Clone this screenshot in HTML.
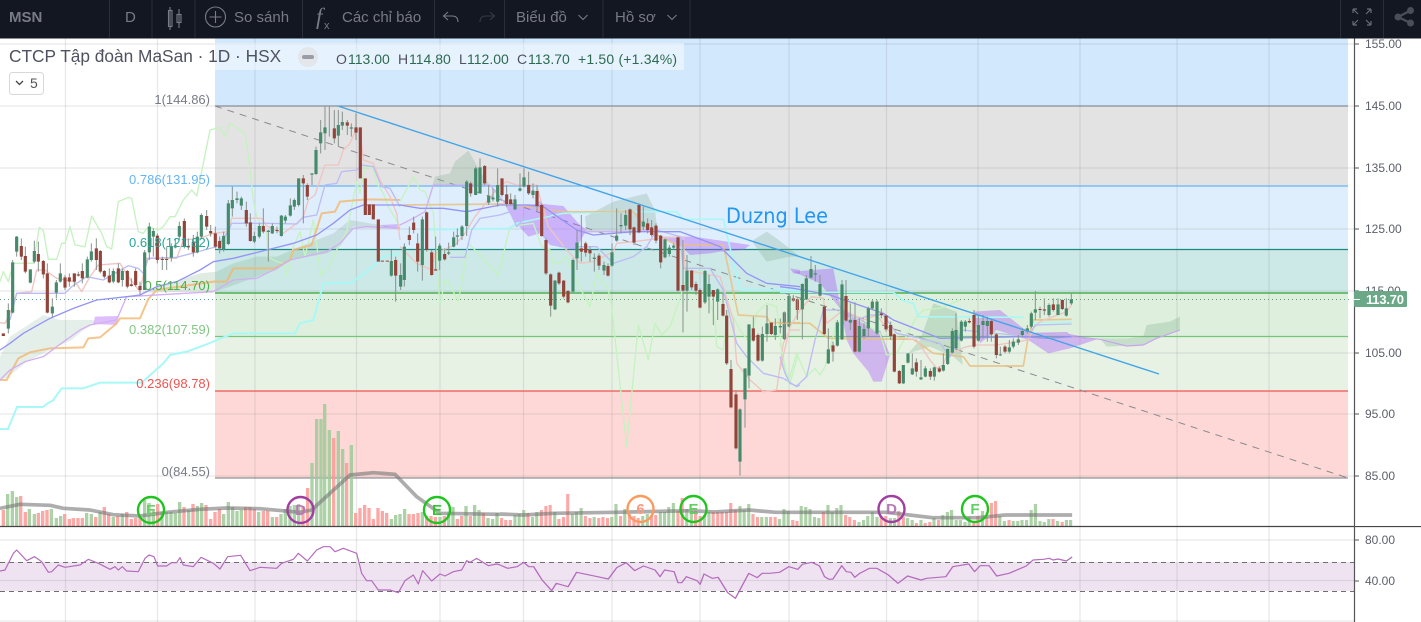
<!DOCTYPE html>
<html lang="vi"><head><meta charset="utf-8"><title>MSN</title>
<style>
html,body{margin:0;padding:0;background:#fff;width:1421px;height:622px;overflow:hidden}
svg{display:block;font-family:"Liberation Sans","Noto Sans CJK SC",sans-serif}
.n{fill:none;stroke-linejoin:round}
.g{stroke:#468a6c;stroke-width:9.500;fill:none}
.r{stroke:#93443a;stroke-width:9.500;fill:none}
.w{stroke:#87938d;stroke-width:3;fill:none}
.h{fill:#787b86;font-size:15px}
</style></head><body>
<svg width="1421" height="622" viewBox="0 0 1421 622" xmlns="http://www.w3.org/2000/svg">
<!-- bands -->
<rect x="215" y="38" width="1133" height="68" fill="#d1e8fd"/>
<rect x="215" y="106" width="1133" height="80" fill="#e3e3e4"/>
<rect x="215" y="186" width="1133" height="63" fill="#dfeefc"/>
<rect x="215" y="249" width="1133" height="44" fill="#cce8e7"/>
<rect x="215" y="293" width="1133" height="43" fill="#deefdd"/>
<rect x="215" y="336" width="1133" height="55" fill="#e7f2e5"/>
<rect x="215" y="391" width="1133" height="87" fill="#fdd8d6"/>
<rect x="0" y="562" width="1354" height="29" fill="#efe3f1"/>
<!-- grid -->
<path d="M65.5 38V622M157.5 38V622M255 38V622M356.5 38V622M440 38V622M523.5 38V622M612 38V622M700 38V622M789 38V622M886.5 38V622M978 38V622M1080 38V622M1177 38V622M1269 38V622" stroke="#8a8a8a" stroke-opacity=".2" stroke-width="1.2" fill="none"/>
<path d="M0 44H1354M0 106H1354M0 168H1354M0 229H1354M0 291H1354M0 353H1354M0 414H1354M0 476H1354M0 540H1354M0 580.5H1354M0 621H1354" stroke="#8a8a8a" stroke-opacity=".2" stroke-width="1.2" fill="none"/>
<!-- fib lines -->
<path d="M215 106H1348" stroke="#787b86" stroke-width="1.1"/>
<path d="M215 186H1348" stroke="#64b5f6" stroke-width="1.2"/>
<path d="M215 249.5H1348" stroke="#1a8a7e" stroke-width="1.2"/>
<path d="M215 293H1348" stroke="#4caf50" stroke-width="1.4"/>
<path d="M215 336.5H1348" stroke="#78c47c" stroke-width="1.2"/>
<path d="M215 391H1348" stroke="#ef5350" stroke-width="1.2"/>
<path d="M215 478H1348" stroke="#787b86" stroke-width="1.1"/>
<path d="M215 106L1348 478" stroke="#8a8a90" stroke-width="1" stroke-dasharray="7 6" fill="none"/>
<path d="M0 299.5H1352" stroke="#5f9a80" stroke-width="1" stroke-dasharray="1 3" fill="none"/>
<!-- volume -->
<g transform="translate(0 526) scale(.33333 -1)" stroke-width="10" fill="none" opacity=".85">
<path stroke="#fb9a98" d="M10 0V16M62 0V30M76 0V14M115 0V13M128 0V15M141 0V16M194 0V12M208 0V7M220 0V8M234 0V8M247 0V8M287 0V9M313 0V19M326 0V12M353 0V10M380 0V14M394 0V7M407 0V8M420 0V9M473 0V22M552 0V19M579 0V22M618 0V21M632 0V7M645 0V14M658 0V17M737 0V19M750 0V19M763 0V17M790 0V15M803 0V15M830 0V9M909 0V20M923 0V38M1001 0V88M1040 0V63M1067 0V13M1080 0V18M1094 0V21M1107 0V18M1120 0V7M1134 0V18M1147 0V15M1160 0V13M1227 0V12M1240 0V12M1254 0V13M1280 0V10M1293 0V10M1306 0V9M1333 0V10M1372 0V7M1385 0V10M1411 0V10M1450 0V13"/>
<path stroke="#9fcb98" d="M23 0V32M37 0V35M50 0V29M88 0V17M103 0V12M154 0V17M169 0V8M182 0V10M260 0V13M274 0V12M300 0V14M340 0V9M367 0V12M434 0V26M447 0V23M460 0V16M486 0V14M500 0V14M513 0V14M526 0V13M539 0V24M566 0V16M592 0V20M605 0V23M671 0V12M685 0V24M698 0V19M711 0V15M724 0V16M776 0V14M817 0V9M843 0V12M856 0V17M870 0V20M883 0V21M896 0V22M936 0V63M950 0V107M963 0V107M974 0V122M988 0V96M1015 0V95M1028 0V77M1054 0V81M1174 0V7M1187 0V11M1200 0V12M1214 0V17M1267 0V14M1320 0V9M1346 0V13M1359 0V19M1398 0V20M1424 0V21M1437 0V16M1464 0V8M1478 0V7M1491 0V13"/>
</g>
<g transform="translate(500 526) scale(.3827 -1)" stroke-width="8.2" fill="none" opacity=".85">
<path stroke="#fb9a98" d="M4 0V8M15 0V6M27 0V6M73 0V13M108 0V16M120 0V20M131 0V21M154 0V7M166 0V9M177 0V32M223 0V10M235 0V8M258 0V8M269 0V9M281 0V8M315 0V10M338 0V12M350 0V10M361 0V8M396 0V11M407 0V11M465 0V15M476 0V28M511 0V15M523 0V10M557 0V14M569 0V14M580 0V14M592 0V14M603 0V23M615 0V16M661 0V12M673 0V9M707 0V9M719 0V9M765 0V6M776 0V5M845 0V14M903 0V11M914 0V9M926 0V6M996 0V9M1008 0V10M1042 0V15M1054 0V9M1088 0V3M1111 0V3M1123 0V4M1146 0V6M1238 0V5M1249 0V10M1272 0V9M1284 0V23M1295 0V25M1330 0V6M1445 0V7M1469 0V4"/>
<path stroke="#9fcb98" d="M39 0V11M50 0V12M62 0V16M85 0V9M96 0V14M143 0V14M189 0V12M200 0V14M212 0V18M246 0V9M292 0V9M303 0V22M326 0V17M373 0V10M385 0V12M419 0V14M430 0V14M441 0V19M453 0V23M488 0V17M500 0V15M534 0V11M546 0V14M627 0V20M638 0V16M650 0V22M684 0V9M696 0V9M730 0V7M742 0V17M753 0V15M787 0V20M799 0V19M810 0V17M822 0V9M833 0V8M857 0V21M868 0V14M880 0V18M891 0V21M938 0V4M950 0V6M961 0V10M973 0V14M985 0V9M1020 0V8M1031 0V8M1065 0V8M1077 0V6M1100 0V6M1134 0V8M1157 0V11M1169 0V14M1180 0V16M1192 0V6M1203 0V6M1215 0V4M1226 0V9M1261 0V15M1306 0V10M1318 0V5M1341 0V5M1353 0V5M1364 0V6M1376 0V6M1388 0V16M1399 0V22M1411 0V5M1422 0V4M1434 0V7M1457 0V5M1480 0V6M1491 0V6"/>
</g>
<path d="M0 526.5H1421" stroke="#444" stroke-width="1.2"/>
<!-- SMA -->
<g transform="translate(0 400) scale(.33333)"><polyline class="n" stroke="#777" stroke-opacity=".6" stroke-width="11" points="0,325 60,313 150,316 190,325 270,330 340,344 420,348 500,337 600,328 680,324 780,326 900,337 935,330 1050,225 1120,218 1185,223 1250,290 1320,340 1500,343"/></g>
<g transform="translate(500 470) scale(.3827 .33333)"><polyline class="n" stroke="#777" stroke-opacity=".6" stroke-width="11" points="0,132 60,135 140,130 300,127 500,122 560,126 650,120 720,127 1010,127 1130,143 1250,143 1320,135 1495,135"/></g>
<!-- RSI -->
<path d="M0 562.5H1354M0 591.5H1354" stroke="#6f6f6f" stroke-width="1" stroke-dasharray="5 4" fill="none"/>
<g transform="translate(0 400) scale(.33333)"><polyline class="n" stroke="#b46cbd" stroke-width="3.6" points="0,513 15,510 40,460 50,450 80,482 103,470 125,485 145,517 155,515 175,495 195,502 240,495 265,478 295,490 330,508 345,500 355,510 367,500 380,513 415,515 435,475 447,465 462,470 473,498 500,498 515,488 530,488 540,473 550,495 580,500 603,472 640,490 660,507 683,470 722,466 750,512 780,502 830,505 845,490 880,478 895,460 922,483 950,450 970,440 990,440 1005,455 1030,445 1070,460 1085,520 1100,542 1115,542 1135,570 1170,570 1195,578 1215,542 1240,525 1255,552 1268,512 1295,543 1320,522 1335,528 1360,515 1385,510 1400,482 1410,487 1430,475 1465,497 1490,492 1500,495"/></g>
<g transform="translate(500 470) scale(.3827 .33333)"><polyline class="n" stroke="#b46cbd" stroke-width="3.6" points="0,285 20,295 45,290 62,277 75,290 88,290 110,330 135,362 147,340 178,350 200,307 255,320 283,327 305,293 330,278 352,302 375,288 405,300 418,320 430,300 455,305 465,338 475,338 487,320 515,332 523,343 533,312 555,325 570,322 595,368 615,385 650,310 672,323 685,310 705,310 730,307 755,290 778,298 790,283 815,277 835,288 848,320 860,328 870,327 893,287 905,305 917,307 927,322 940,310 965,295 985,295 1015,315 1040,340 1065,318 1100,330 1115,325 1165,320 1183,290 1225,282 1240,305 1255,287 1278,287 1298,318 1330,310 1375,288 1393,270 1420,268 1435,265 1445,270 1458,267 1480,273 1495,261"/></g>
<!-- left section 0-400 -->
<polyline class="n" stroke="#a8f8f8" stroke-width="2" points="0,429 8,429 17,407 43,407 48,403 54,400"/>
<g transform="translate(0 100) scale(.33333)">
<polygon fill="#7fae8f" fill-opacity=".2" points="0,770 30,710 130,645 180,660 280,660 285,670 250,690 215,720 150,750 80,785 50,810 20,835 0,835"/>
<polygon fill="#a855f7" fill-opacity=".38" points="285,650 355,648 350,675 280,672"/>
<polygon fill="#7fae8f" fill-opacity=".25" points="420,578 490,555 600,520 650,515 700,490 770,470 830,470 900,440 1000,400 1050,360 1200,385 1140,385 1060,380 1020,440 980,460 870,480 830,510 770,530 690,560 645,575"/>
<polygon fill="#a855f7" fill-opacity=".35" points="1140,375 1200,372 1200,388 1160,384"/>
<polyline class="n" stroke="#c4f3bf" stroke-width="4" points="0,545 10,515 25,545 40,490 100,490 118,382 130,392 145,478 170,478 185,430 195,430 210,380 225,435 255,440 275,348 305,400 320,440 335,447 355,305 385,292 395,295 415,395 430,400 445,380 475,390 490,380 510,350 525,350 550,300 575,270 590,288 610,190 630,90 660,82 675,110 690,70 735,100 745,170 760,300 770,350 800,400 805,470 830,485 850,490 860,525 880,440 900,395 915,470 940,360 962,525 985,505 1010,450 1040,395 1070,245 1080,280 1095,200 1120,205 1130,250 1150,280 1165,320 1200,380"/>
<polyline class="n" stroke="#a8f8f8" stroke-width="6" points="160,900 185,865 250,865 300,848 425,848 490,790 510,765 560,755 615,735 700,700 885,700 900,670 940,660 970,550 1055,548 1100,515 1150,470 1200,460"/>
<polyline class="n" stroke="#f2b66e" stroke-width="6" stroke-opacity=".8" points="0,840 20,840 55,775 90,757 150,745 250,742 265,715 300,712 350,670 360,655 420,655 445,597 470,570 640,545 680,545 700,505 825,505 870,480 880,450 935,435 965,340 1005,335 1020,305 1100,298 1200,300"/>
<polyline class="n" stroke="#d2b0f2" stroke-width="4" points="0,840 30,810 75,785 130,770 170,740 240,690 270,675 350,660 380,590 640,575 700,540 770,535 830,505 870,480 980,455 1020,430 1060,385 1100,380 1200,385"/>
<polyline class="n" stroke="#f0c4c0" stroke-width="4" points="0,668 15,670 30,640 50,580 95,575 110,510 135,510 170,535 225,545 245,575 270,530 295,495 360,490 385,530 420,575 440,475 500,475 530,475 550,420 600,415 640,400 685,395 695,355 785,355 800,378 850,400 890,370 910,350 925,300 945,285 975,195 1015,195 1030,150 1050,130 1068,90 1080,90 1090,180 1120,190 1140,240 1170,290 1190,340 1200,420"/>
<polyline class="n" stroke="#bcbcf5" stroke-width="4" points="30,660 50,580 195,580 215,560 260,530 310,540 385,497 415,505 430,520 445,475 530,472 595,455 650,440 685,395 695,370 780,370 800,370 890,372 910,352 950,345 975,255 1010,250 1025,215 1070,210 1085,195 1120,200 1145,260 1170,265 1200,320"/>
<polyline class="n" stroke="#9494f6" stroke-width="4" points="0,750 30,730 70,700 150,655 220,625 290,600 380,590 420,585 470,560 530,545 600,510 640,485 700,475 800,450 880,430 950,405 1000,370 1050,330 1090,315 1200,315"/>
<path class="w" d="M25 610V700M38 480V640M50 408V470M64 415V480M76 440V520M91 508V550M103 422V490M115 425V515M130 480V535M142 490V640M157 595V652M169 540V595M181 490V548M195 525V570M208 520V560M223 520V560M235 515V530M247 490V550M262 470V535M274 430V485M289 415V510M301 450V520M313 510V535M328 505V550M340 505V550M355 490V550M367 505V560M382 510V565M394 535V560M407 505V560M420 545V585M434 450V570M448 368V480M460 385V470M472 400V490M487 470V510M500 440V510M514 430V485M526 415V445M538 365V420M553 355V445M565 415V450M580 405V470M592 395V460M604 340V415M620 330V390M632 375V410M646 380V445M659 410V460M671 395V455M685 300V435M697 260V350M711 275V310M724 290V330M739 305V380M751 340V425M763 395V430M778 370V415M790 325V400M805 390V485M817 370V402M831 380V400M844 345V410M856 345V370M871 295V350M883 295V330M896 235V320M910 225V370M922 250V300M936 220V255M948 140V225M962 60V160M975 20V150M988 20V110M1003 30V130M1015 30V140M1027 35V90M1042 60V105M1054 70V110M1068 40V120M1174 450V530M1187 470V605"/>
<path class="g" d="M38 487V638M25 630V686M50 410V455M91 508V548M103 453V485M157 620V640M169 547V578M181 520V545M262 478V533M274 454V480M340 513V545M367 513V540M434 457V570M448 380V457M460 393V410M514 438V473M538 378V410M592 410V457M604 345V410M671 408V447M685 310V432M697 300V325M711 295V300M724 295V317M763 408V425M778 378V410M805 392V396M817 378V400M844 347V408M856 350V362M871 316V347M883 300V320M896 235V315M936 220V224M948 150V222M962 97V130M975 82V100M1015 75V107M1027 66V77M1054 82V86M1174 483V527"/>
<path class="r" d="M10 700V708M64 438V470M76 468V515M115 462V485M130 483V523M142 520V638M195 532V563M208 532V545M223 520V545M235 523V527M247 513V535M289 445V480M301 453V515M313 513V530M328 527V547M355 505V547M382 513V560M394 553V558M407 513V555M420 558V570M472 407V480M487 477V480M500 477V480M526 437V442M553 363V440M565 438V442M580 425V457M620 348V380M632 393V400M646 400V440M659 423V445M739 330V370M751 367V423M790 378V395M831 390V393M910 235V250M922 255V290M1003 85V115M1042 67V77M1068 82V98M1081 82V235M1096 235V345M1108 313V345M1120 313V358M1135 358V485M1147 482V485M1162 482V485M1187 480V527"/>
</g>
<!-- mid section 400-800 -->
<g transform="translate(400 130) scale(.33333)">
<polygon fill="#7fae8f" fill-opacity=".28" points="80,225 105,140 150,130 165,95 205,62 250,140 270,165 100,165"/>
<polygon fill="#a855f7" fill-opacity=".38" points="315,225 430,222 490,228 535,280 560,300 525,360 450,345 420,310 385,320 340,270"/>
<polygon fill="#7fae8f" fill-opacity=".28" points="555,260 640,215 740,190 765,240 772,300 700,310 560,305"/>
<polygon fill="#a855f7" fill-opacity=".38" points="775,320 880,320 1050,345 1030,360 960,365 930,370 870,375 840,345"/>
<polygon fill="#7fae8f" fill-opacity=".28" points="1060,330 1100,305 1130,325 1200,380 1170,380 1100,395 1060,340"/>
<polygon fill="#a855f7" fill-opacity=".38" points="1170,415 1200,420 1200,432 1180,430"/>
<polyline class="n" stroke="#c4f3bf" stroke-width="4" points="0,215 40,140 60,180 75,185 100,250 120,525 135,450 145,455 175,515 205,340 230,365 265,405 295,435 330,290 400,280 425,350 450,360 460,400 475,400 500,380 520,430 535,465 570,530 590,430 625,480 635,530 650,670 680,950 715,585 745,690 765,580 785,615 810,590 840,505 860,440 885,430 910,420 925,500 945,570 950,650 970,660 985,540 1000,560 1020,600 1050,640 1070,550 1100,520 1130,530 1150,700 1170,760 1195,670"/>
<polyline class="n" stroke="#a8f8f8" stroke-width="5" points="75,300 330,295 350,280 490,250 660,245 830,245 850,268 970,268 1020,480 1200,480"/>
<polyline class="n" stroke="#e8bf80" stroke-width="5" stroke-opacity=".8" points="0,225 320,222 490,245 700,245 745,300 780,320 830,345 970,345 1015,555 1100,560 1110,578 1200,578"/>
<polyline class="n" stroke="#f0c4c0" stroke-width="4" points="0,350 50,400 95,420 105,370 165,345 195,310 225,260 300,165 320,155 350,165 410,165 425,220 445,290 500,360 540,400 580,395 640,365 650,340 700,335 780,325 850,320 855,420 960,440 1000,570 1010,700 1050,750 1090,785 1130,780 1150,640 1170,600 1200,600"/>
<polyline class="n" stroke="#bcbcf5" stroke-width="4" points="150,382 195,382 215,300 240,265 300,255 330,245 350,290 420,215 440,330 480,350 590,350 640,400 700,380 740,350 770,300 840,320 850,415 930,415 970,480 1010,640 1040,680 1090,730 1150,745 1190,770 1200,765"/>
<polyline class="n" stroke="#d2b0f2" stroke-width="4" points="0,285 40,265 75,245 100,165 270,165 320,225 440,225 490,290 530,300 560,305 700,305 770,300"/>
<polyline class="n" stroke="#9494f6" stroke-width="4" points="0,225 60,235 130,235 200,245 300,225 380,225 430,230 530,300 580,315 700,305 840,305 960,350 1040,430 1100,460 1200,470"/>
<path class="w" d="M2 400V480M13 340V470M28 290V345M41 260V310M53 310V425M67 260V452M80 245V365M95 360V437M107 320V420M119 340V420M134 355V392M146 338V375M161 305V352M172 295V345M186 285V330M200 150V318M212 155V200M227 110V195M240 85V190M254 105V165M266 165V225M279 175V215M293 115V230M306 145V200M320 165V230M332 190V225M345 195V240M360 130V185M372 115V172M386 125V195M399 160V205M411 165V245M425 220V320M438 325V435M452 430V560M465 450V540M477 425V465M491 450V505M504 480V520M519 385V490M531 300V420M544 255V395M557 335V380M570 350V395M583 370V425M597 370V420M612 395V435M624 400V440M636 340V410M650 235V335M663 250V310M677 240V300M690 235V315M702 290V345M717 220V310M730 230V300M743 265V310M755 270V320M768 280V340M782 315V415M795 325V385M808 345V380M821 340V360M834 320V485M849 330V607M861 375V545M875 420V480M888 455V495M900 475V535M915 420V522M927 435V550M940 480V585M953 475V570M969 490V560M980 540V705M993 690V835M1008 780V958M1020 835V1037M1035 800V893M1047 715V775M1060 560V635M1074 610V695M1087 590V695M1101 525V635M1114 578V615M1126 565V630M1141 565V610M1153 545V630M1167 495V590M1180 498V515M1192 505V565"/>
<path class="g" d="M2 435V470M13 350V450M67 268V405M119 347V392M146 367V371M161 322V350M172 316V320M186 290V318M200 155V288M227 115V195M240 112V190M266 198V218M279 203V208M293 165V215M345 208V238M360 175V182M372 142V170M399 182V195M465 452V538M519 390V485M531 338V385M583 383V387M612 405V422M636 367V407M650 317V332M663 285V289M677 255V287M730 275V290M795 328V382M808 353V372M821 347V353M861 422V482M915 423V517M927 462V500M953 478V515M1020 838V995M1035 715V808M1047 583V737M1087 612V692M1101 580V612M1126 588V615M1141 588V592M1153 547V627M1167 498V590"/>
<path class="r" d="M28 315V330M41 278V300M53 340V395M80 247V360M95 367V435M107 418V422M134 372V388M212 160V190M254 108V160M306 145V195M320 193V222M332 208V222M386 165V190M411 183V228M425 225V318M438 330V430M452 433V527M477 428V460M491 452V500M504 483V517M544 355V365M557 340V368M570 360V370M597 377V407M624 408V437M690 238V298M702 292V338M717 225V307M743 280V300M755 292V315M768 287V332M782 317V397M834 322V482M849 465V482M875 422V472M888 462V482M900 480V533M940 480V500M969 522V557M980 557V700M993 717V832M1008 793V955M1060 595V632M1074 615V692M1114 578V612M1180 505V512M1192 508V540"/>
</g>
<!-- right section 780+ -->
<g transform="translate(780 240) scale(.33333)">
<polygon fill="#a855f7" fill-opacity=".38" points="40,95 160,85 175,165 200,300 220,340 265,395 280,425 305,425 330,345 300,270 290,280 250,240 180,205 120,130"/>
<polygon fill="#7fae8f" fill-opacity=".3" points="385,340 420,300 460,190 530,215 548,375 520,350 450,320"/>
<polygon fill="#a855f7" fill-opacity=".38" points="580,215 660,210 730,265 760,280 860,280 950,298 870,325 805,340 745,300 650,270 600,310"/>
<polygon fill="#7fae8f" fill-opacity=".3" points="960,295 1040,295 1090,290 1100,255 1170,245 1200,230 1200,270 1130,295 1090,315 980,320"/>
<polyline class="n" stroke="#c4f3bf" stroke-width="4" points="0,310 25,425 50,340 80,410 105,385 120,405 135,380 170,250 220,230 300,280 320,345 350,340 410,230 430,210 480,205 540,180"/>
<polyline class="n" stroke="#a8f8f8" stroke-width="5" points="0,157 340,157 370,182 400,190 415,230 730,232"/>
<polyline class="n" stroke="#a8f8f8" stroke-width="4" points="760,248 875,246"/>
<polyline class="n" stroke="#e8bf80" stroke-width="5" stroke-opacity=".85" points="0,250 90,250 145,295 400,298 460,340 550,350 570,378 730,378 745,290 760,240 875,238"/>
<polyline class="n" stroke="#f0c4c0" stroke-width="4" points="0,390 30,260 60,210 95,170 130,175 140,250 190,210 250,240 290,225 340,290 410,300 450,360 470,385 490,375 500,345 560,320 590,315 650,315 745,300 760,265 780,245 860,215 875,195"/>
<polyline class="n" stroke="#bcbcf5" stroke-width="4" points="0,350 15,400 30,430 50,438 80,410 105,300 130,210 190,210 230,240 270,225 310,225 350,280 420,295 480,310 510,350 520,330 545,270 700,285 745,290 765,255 875,252"/>
<polyline class="n" stroke="#c8a4ee" stroke-width="3.500" points="760,280 860,278 875,290 960,298 1040,318 1090,315 1130,295 1200,270"/>
<polyline class="n" stroke="#9494f6" stroke-width="4" points="0,140 40,145 150,165 310,220 340,240 480,295 740,290 800,295 875,290"/>
<path class="w" d="M13 215V300M28 165V262M40 165V185M52 175V240M67 130V298M79 105V180M93 48V115M106 75V125M120 105V170M133 195V285M145 265V372M159 305V365M172 240V320M186 120V300M198 120V245M211 190V270M225 187V337M238 235V337M252 250V295M265 200V290M277 180V210M291 180V285M304 205V235M318 225V275M332 245V300M343 280V397M358 390V432M370 375V432M384 340V370M397 340V405M409 355V410M423 360V420M436 378V412M451 385V420M463 380V422M478 380V398M490 340V395M503 325V375M517 265V340M528 220V330M544 240V305M556 240V275M568 235V250M582 210V325M595 225V305M609 225V295M622 230V305M634 240V305M649 280V355M661 320V348M675 315V340M688 300V340M700 295V325M715 285V315M727 265V290M742 255V280M754 215V265M766 153V240M780 200V235M793 175V225M807 190V230M820 175V215M834 175V225M847 178V210M859 175V230M874 158V195"/>
<path class="g" d="M67 132V208M79 115V178M93 87V113M106 100V104M120 132V167M145 328V370M172 247V317M186 133V298M211 240V248M238 258V335M252 267V288M265 205V265M277 185V205M291 185V280M370 375V430M384 340V368M397 385V403M423 412V418M436 385V410M463 382V410M490 375V392M503 327V372M517 273V338M528 270V325M544 245V302M556 245V260M595 255V302M609 243V255M622 243V258M661 343V346M688 322V335M700 305V320M715 298V308M727 273V285M742 265V275M754 220V260M766 208V218M807 195V225M834 193V225M859 205V227M874 178V190"/>
<path class="r" d="M133 200V282M159 316V335M198 168V242M225 240V335M304 220V225M318 227V268M332 255V288M343 283V395M358 393V430M409 367V395M451 393V410M478 385V395M568 243V247M582 225V320M634 243V283M649 283V345M675 320V335M780 207V210M793 208V212M820 193V210M847 180V207"/>
</g>
<!-- trend -->
<path d="M338 106L1159 374" stroke="#42a5e8" stroke-width="1.4" fill="none"/>
<!-- events -->
<g fill="none" stroke-width="2.4" font-size="15" text-anchor="middle" font-weight="bold">
<circle cx="151" cy="510" r="13" stroke="#1fc41f"/><text x="151" y="515" fill="#6ccf6c">E</text>
<circle cx="300.5" cy="510" r="13" stroke="#a03ea0"/><text x="300.5" y="515" fill="#b678b6">D</text>
<circle cx="437" cy="510" r="13" stroke="#1fc41f"/><text x="437" y="515" fill="#2fc82f">E</text>
<circle cx="640.5" cy="509" r="13" stroke="#fb9a5f"/><text x="640.5" y="514" fill="#fb9a7f">6</text>
<circle cx="693.5" cy="509" r="13" stroke="#1fc41f"/><text x="693.5" y="514" fill="#62cf62">E</text>
<circle cx="891.5" cy="509" r="13" stroke="#a03ea0"/><text x="891.5" y="514" fill="#b678b6">D</text>
<circle cx="975" cy="509" r="13" stroke="#1fc41f"/><text x="975" y="514" fill="#62cf62">F</text>
</g>
<!-- fib labels -->
<g font-size="13" text-anchor="end">
<text x="210" y="104" fill="#787b86">1(144.86)</text>
<text x="210" y="184" fill="#64b5f6">0.786(131.95)</text>
<text x="210" y="247" fill="#26a69a">0.618(121.82)</text>
<text x="210" y="290" fill="#4caf50">0.5(114.70)</text>
<text x="210" y="334" fill="#81c784">0.382(107.59)</text>
<text x="210" y="388" fill="#ef5350">0.236(98.78)</text>
<text x="210" y="476" fill="#787b86">0(84.55)</text>
</g>
<text x="726" y="223" fill="#2196f3" font-size="21" font-family="DejaVu Sans, sans-serif" textLength="102" lengthAdjust="spacingAndGlyphs">Duzng Lee</text>
<!-- legend -->
<rect x="215" y="43" width="469" height="27" fill="#fff" fill-opacity=".45"/>
<text x="9" y="62" font-size="17.3" fill="#4f5260">CTCP Tập đoàn MaSan · 1D · HSX</text>
<circle cx="308" cy="57" r="10" fill="#e3e6ea"/><rect x="302" y="55" width="12" height="4" rx="2" fill="#9a9da5"/>
<g font-size="14"><text x="336" y="64" fill="#4f5260">O</text><text x="348" y="64" fill="#2d6a4f">113.00</text>
<text x="398" y="64" fill="#4f5260">H</text><text x="409" y="64" fill="#2d6a4f">114.80</text>
<text x="459" y="64" fill="#4f5260">L</text><text x="467" y="64" fill="#2d6a4f">112.00</text>
<text x="517" y="64" fill="#4f5260">C</text><text x="528" y="64" fill="#2d6a4f">113.70</text>
<text x="578" y="64" fill="#2d6a4f" textLength="99">+1.50 (+1.34%)</text></g>
<rect x="9.5" y="72.5" width="34" height="22" rx="3" fill="#fff" stroke="#d8d8d8"/>
<path d="M16 81l3.5 3.5L23 81" stroke="#444" stroke-width="1.3" fill="none"/>
<text x="30" y="88" font-size="14" fill="#555">5</text>
<!-- axis -->
<rect x="1355" y="38" width="66" height="488" fill="#fff"/>
<path d="M1354.5 38V622" stroke="#555" stroke-width="1.2"/>
<path d="M1355 44h4M1355 106h4M1355 168h4M1355 229h4M1355 291h4M1355 353h4M1355 414h4M1355 476h4M1355 540h4M1355 581h4" stroke="#555"/>
<g font-size="12" fill="#5d606b">
<text x="1365" y="48">155.00</text><text x="1365" y="110">145.00</text><text x="1365" y="172">135.00</text><text x="1365" y="233">125.00</text><text x="1365" y="295">115.00</text><text x="1365" y="357">105.00</text><text x="1365" y="418">95.00</text><text x="1365" y="480">85.00</text><text x="1365" y="544">80.00</text><text x="1365" y="585">40.00</text>
</g>
<rect x="1354" y="291" width="53" height="16" rx="1" fill="#6aa888"/>
<path d="M1354 299.5h6" stroke="#fff" stroke-width="1"/>
<text x="1366" y="304" font-size="13" font-weight="bold" fill="#fff" textLength="38">113.70</text>
<!-- header -->
<rect x="0" y="0" width="1421" height="38.5" fill="#131722"/>
<path d="M109.5 0V38M152 0V38M195 0V38M302.5 0V38M434.5 0V38M504.5 0V38M603 0V38M690 0V38M1340.5 0V38M1383.5 0V38" stroke="#2a2e39"/>
<text x="9" y="22" fill="#787b86" font-weight="bold" font-size="15">MSN</text>
<text x="125" y="22" class="h">D</text>
<g stroke="#787b86" fill="none" stroke-width="1.1">
<rect x="168.5" y="10.5" width="3.5" height="16"/><path d="M170 7V30"/>
<rect x="177" y="14.5" width="4" height="8"/><path d="M179 9V28"/>
<circle cx="215.5" cy="17" r="10"/><path d="M215.5 11v12M209.5 17h12"/>
<path d="M448 13l-4.500 4 4.500 4M444 17h8q6 0 6 6" transform="translate(0 -1)"/>
<path d="M578.500 15l4.500 4.500 4.500-4.500M667.500 15l4.500 4.500 4.500-4.500"/>
</g>
<path d="M490 13l4.500 4-4.500 4M494 17h-8q-6 0-6 6" transform="translate(0 -1)" stroke="#363a45" stroke-width="1.1" fill="none"/>
<text x="234" y="22" class="h">So sánh</text>
<text x="316" y="24" fill="#787b86" font-family="Liberation Serif,serif" font-style="italic" font-size="23">f</text>
<text x="324" y="29" fill="#787b86" font-size="11">x</text>
<text x="342" y="22" class="h">Các chỉ báo</text>
<text x="516" y="22" class="h">Biểu đồ</text>
<text x="615" y="22" class="h">Hồ sơ</text>
<g stroke="#686b76" stroke-width="1.2" fill="none">
<path d="M1353 9l5 5M1353 9h4M1353 9v4M1371 9l-5 5M1371 9h-4M1371 9v4M1353 25l5-5M1353 25h4M1353 25v-4M1371 25l-5-5M1371 25h-4M1371 25v-4"/>
</g>
<g fill="#4a4e59"><circle cx="1398" cy="17" r="3.500"/><circle cx="1410.500" cy="10.500" r="3.500"/><circle cx="1410.500" cy="23" r="3.500"/></g>
<path d="M1410.500 10.500L1398 17L1410.500 23" stroke="#4a4e59" stroke-width="2.200" fill="none"/>
</svg>
</body></html>
